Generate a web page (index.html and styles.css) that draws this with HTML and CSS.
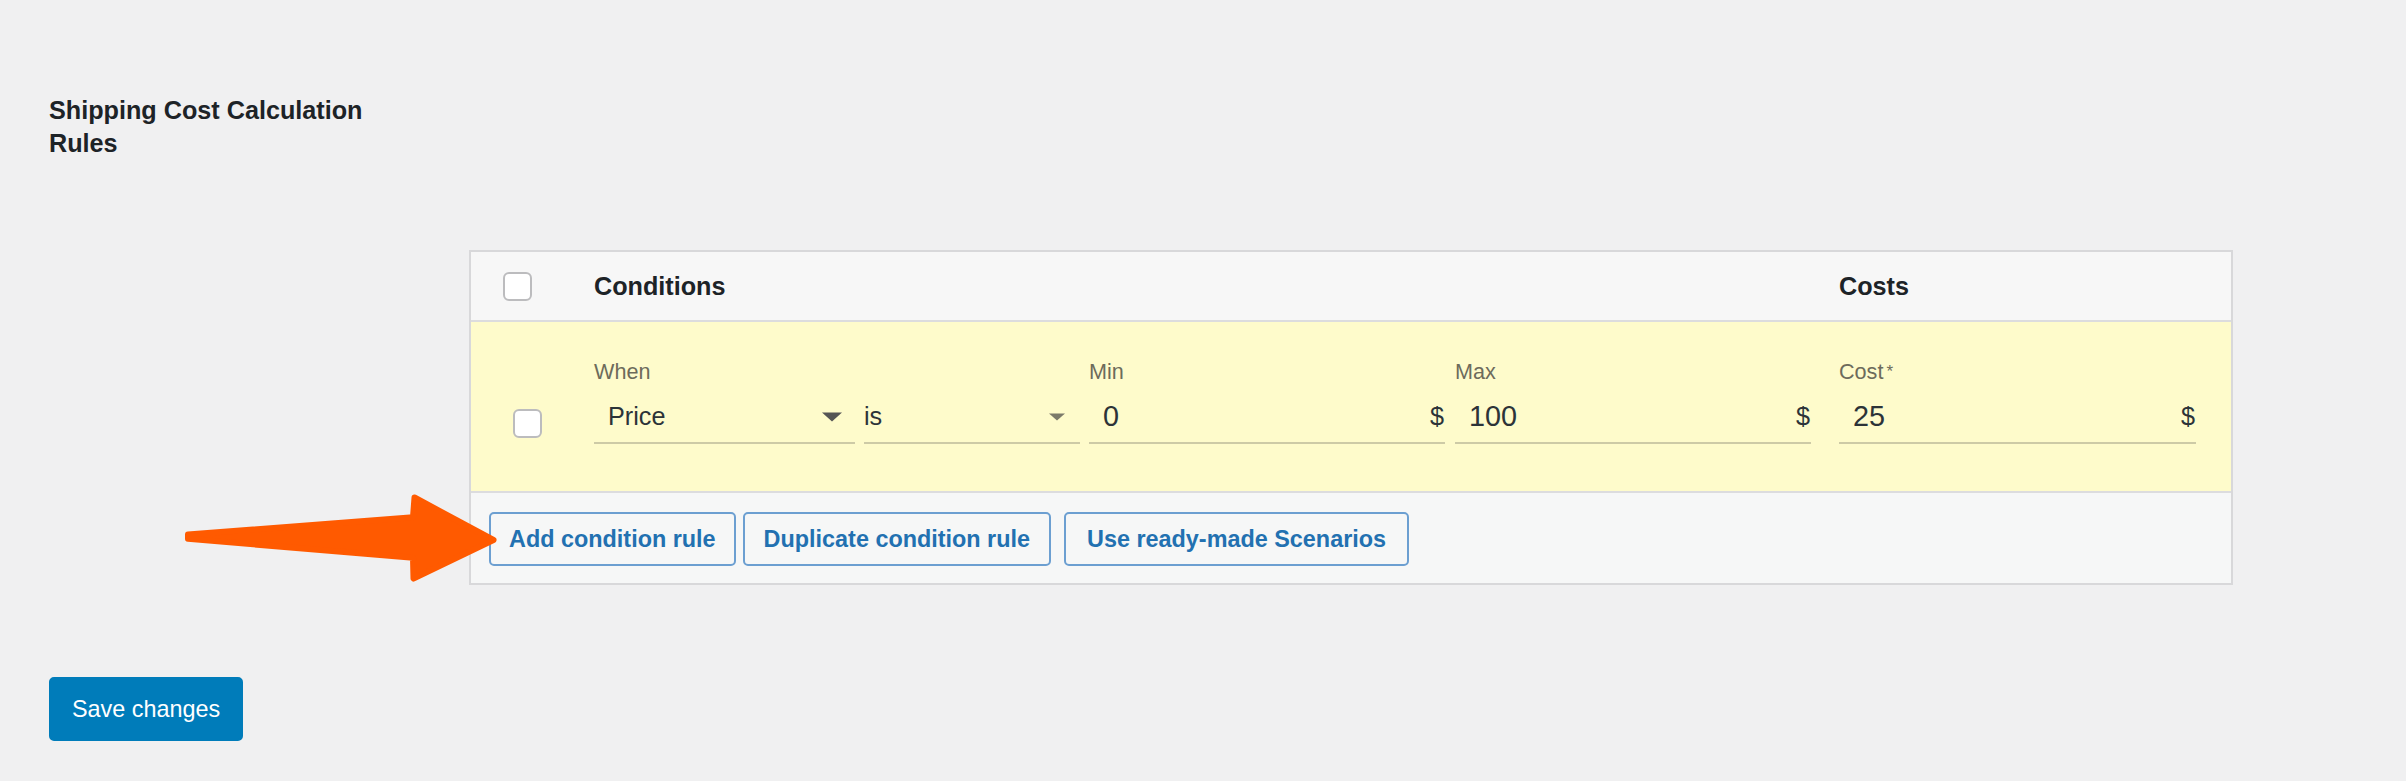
FILE: index.html
```html
<!DOCTYPE html>
<html lang="en">
<head>
<meta charset="utf-8">
<title>Shipping Cost Calculation Rules</title>
<link rel="stylesheet" href="styles.css">
</head>
<body>
<div class="page">
  <div class="setting">
    <h2 class="setting-title">Shipping Cost Calculation Rules</h2>
  </div>

  <div class="rules-wrap">
    <div class="rules">
      <div class="rules-head">
        <div class="cell-check"><input type="checkbox" class="checkbox" aria-label="Select all"></div>
        <div class="cell-cond">Conditions</div>
        <div class="cell-cost">Costs</div>
      </div>

      <div class="rules-row">
        <div class="cell-check"><input type="checkbox" class="checkbox" aria-label="Select rule"></div>
        <div class="cell-cond fields">
          <div class="field f-when">
            <span class="field-label">When</span>
            <div class="control select">
              <span class="value">Price</span>
              <svg class="caret" width="20" height="10" viewBox="0 0 20 10"><polygon points="0,0.5 20,0.5 10,9.5" fill="#555555"/></svg>
            </div>
          </div>
          <div class="field f-is">
            <span class="field-label">&nbsp;</span>
            <div class="control select plain">
              <span class="value">is</span>
              <svg class="caret caret-light" width="16" height="8" viewBox="0 0 16 8"><polygon points="0,0.5 16,0.5 8,7.5" fill="#7b7a6a"/></svg>
            </div>
          </div>
          <div class="field f-min">
            <span class="field-label">Min</span>
            <div class="control input">
              <span class="value">0</span>
              <span class="unit">$</span>
            </div>
          </div>
          <div class="field f-max">
            <span class="field-label">Max</span>
            <div class="control input">
              <span class="value">100</span>
              <span class="unit">$</span>
            </div>
          </div>
        </div>
        <div class="cell-cost fields">
          <div class="field f-cost">
            <span class="field-label">Cost<span class="req">*</span></span>
            <div class="control input">
              <span class="value">25</span>
              <span class="unit">$</span>
            </div>
          </div>
        </div>
      </div>

      <div class="rules-foot">
        <button class="btn">Add condition rule</button>
        <button class="btn btn-dup">Duplicate condition rule</button>
        <button class="btn btn-scen">Use ready-made Scenarios</button>
      </div>
    </div>
  </div>

  <div class="submit">
    <button class="btn-primary">Save changes</button>
  </div>

  <svg class="annot-arrow" width="340" height="115" viewBox="170 480 340 115" aria-hidden="true">
    <polygon points="188,534.6 413,517.2 414.5,497.5 493.5,540 413.5,578.5 413,557.8 188,538.8"
             fill="#ff5a00" stroke="#ff5a00" stroke-width="6" stroke-linejoin="round"/>
  </svg>
</div>
</body>
</html>
```

FILE: styles.css
```css
* {
  box-sizing: border-box;
}

html, body {
  margin: 0;
  padding: 0;
}

body {
  background: #f0f0f1;
  font-family: "Liberation Sans", Arial, Helvetica, sans-serif;
  color: #1d2327;
}

.page {
  position: relative;
  min-height: 781px;
  padding: 94px 0 40px 49px;
}

.setting-title {
  margin: 0;
  width: 342px;
  font-size: 25.2px;
  line-height: 33px;
  font-weight: 700;
  color: #1d2327;
}

.rules-wrap {
  margin-top: 90px;
  padding-left: 420px;
}

.rules {
  width: 1764px;
  border: 2px solid #d8d8da;
  background: #f6f7f7;
}

.rules-head,
.rules-row {
  display: grid;
  grid-template-columns: 123px 1217px 1fr;
}

.rules-head {
  height: 70px;
  align-items: center;
  background: #f7f7f7;
  border-bottom: 2px solid #dcdcde;
  font-size: 25.2px;
  font-weight: 700;
  color: #1d2327;
}

.rules-head .cell-check {
  display: flex;
  padding-left: 32px;
}

.cell-cost {
  padding: 0 35px 0 28px;
}

.checkbox {
  appearance: none;
  -webkit-appearance: none;
  display: block;
  margin: 0;
  width: 29px;
  height: 29px;
  border: 2px solid #bcbcbe;
  border-radius: 6px;
  background: #ffffff;
}

.rules-row {
  background: #fefbcb;
  padding: 37px 0 47px;
  border-bottom: 2px solid #dcdcde;
}

.rules-row .cell-check {
  padding: 50px 0 0 42px;
}

.fields {
  display: flex;
  align-items: flex-start;
}

.field {
  display: flex;
  flex-direction: column;
}

.field-label {
  display: block;
  height: 25px;
  line-height: 25px;
  margin-bottom: 6px;
  font-size: 21.6px;
  color: #6d6b5b;
  white-space: nowrap;
}

.req {
  font-size: 17px;
  margin-left: 3px;
  vertical-align: 2px;
}

.control {
  display: flex;
  align-items: center;
  height: 54px;
  padding-left: 14px;
  border-bottom: 2px solid #cdcaa6;
  color: #2c3338;
}

.control.select {
  font-size: 25.2px;
}

.control.plain {
  padding-left: 0;
}

.control.input {
  font-size: 28.8px;
}

.caret {
  margin-left: auto;
  margin-right: 13px;
  margin-top: 2px;
}

.caret-light {
  margin-right: 15px;
}

.unit {
  margin-left: auto;
  margin-right: 1px;
  font-size: 25.2px;
  color: #2c3338;
}

.f-when {
  width: 261px;
  margin-right: 9px;
}

.f-is {
  width: 216px;
  margin-right: 9px;
}

.f-min {
  width: 356px;
  margin-right: 10px;
}

.f-max {
  width: 356px;
}

.f-cost {
  width: 100%;
}

.rules-foot {
  display: flex;
  align-items: flex-start;
  height: 90px;
  padding: 19px 18px 0;
  background: #f6f7f7;
}

.btn {
  height: 54px;
  padding: 0 18px;
  border: 2px solid #6c9fd1;
  border-radius: 5px;
  background: #f6f7f7;
  color: #2271b1;
  font-family: "Liberation Sans", Arial, Helvetica, sans-serif;
  font-size: 23.4px;
  font-weight: 700;
  white-space: nowrap;
  cursor: pointer;
}

.btn-dup {
  margin-left: 7px;
  padding: 0 19px;
}

.btn-scen {
  margin-left: 13px;
  padding: 0 21px;
}

.submit {
  margin-top: 92px;
}

.btn-primary {
  height: 64px;
  padding: 0 21px;
  border: 2px solid #007cba;
  border-radius: 5px;
  background: #007cba;
  color: #ffffff;
  font-family: "Liberation Sans", Arial, Helvetica, sans-serif;
  font-size: 23.4px;
  font-weight: 400;
  cursor: pointer;
}

.annot-arrow {
  position: absolute;
  left: 170px;
  top: 480px;
  overflow: visible;
}
```
